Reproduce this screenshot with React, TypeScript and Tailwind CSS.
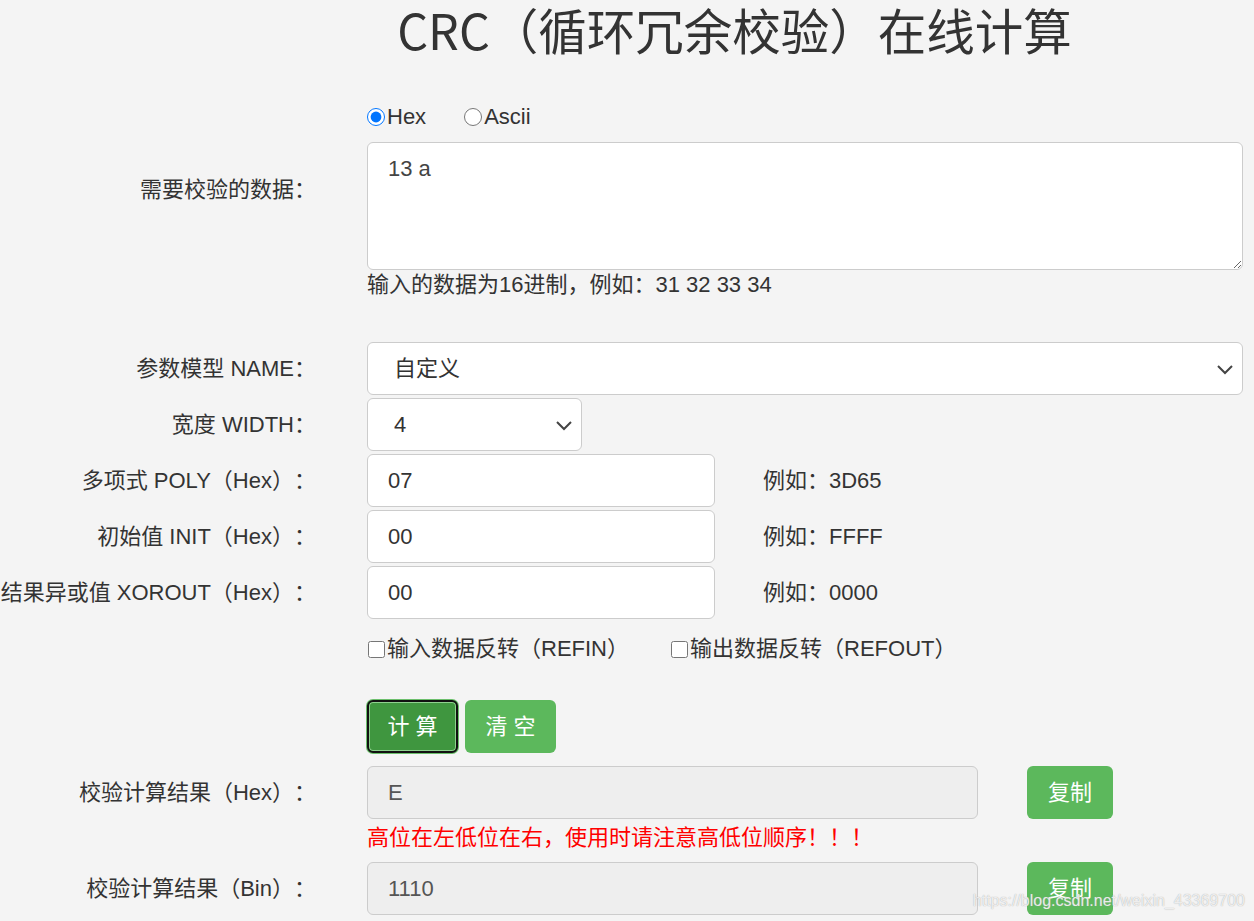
import { useState } from "react";

const Label = ({ children }: { children: React.ReactNode }) => (
  <div className="flex justify-end whitespace-nowrap h-[53px] items-center">{children}</div>
);

const Chevron = () => (
  <svg className="pointer-events-none absolute right-[9px] top-1/2 -translate-y-1/2" width="18" height="12" viewBox="0 0 18 12">
    <path d="M2 3l7 7 7-7" fill="none" stroke="#444" strokeWidth="2" />
  </svg>
);

const App = () => {
  const [mode, setMode] = useState<string>("hex");

  return (
    <div
      className="relative min-h-screen bg-[#f4f4f4] text-[#333] text-[22px] leading-[28px] pr-[11px] overflow-hidden [text-spacing-trim:space-all]"
      style={{ fontFamily: '"Liberation Sans", "Noto Sans CJK SC", sans-serif' }}
    >
      <h1
        className="pl-[226px] text-center text-[48.5px] leading-[58px] text-[#333] whitespace-nowrap"
        style={{ fontFamily: '"Noto Sans CJK SC", sans-serif' }}
      >
        CRC（循环冗余校验）在线计算
      </h1>

      <div className="grid grid-cols-[316px_1fr] gap-x-[51px] mt-[44px]">
        <div />
        <div className="flex items-center gap-[38px] h-[30px]">
          <label className="flex items-center">
            <input
              type="radio"
              checked={mode === "hex"}
              onChange={() => setMode("hex")}
              className="m-0 w-[18px] h-[18px] accent-[#0075ff]"
            />
            <span className="ml-[2px]">Hex</span>
          </label>
          <label className="flex items-center">
            <input
              type="radio"
              checked={mode === "ascii"}
              onChange={() => setMode("ascii")}
              className="m-0 w-[18px] h-[18px]"
            />
            <span className="ml-[2px]">Ascii</span>
          </label>
        </div>

        <div className="flex justify-end whitespace-nowrap pt-[44px]">需要校验的数据：</div>
        <div className="mt-[10px]">
          <textarea
            defaultValue="13 a"
            className="block w-full h-[128px] bg-white border border-[#ccc] rounded-[6px] px-[20px] py-[12px] text-[22px] leading-[28px] text-[#444] resize-y outline-none"
          />
          <div className="leading-[28px] mt-px whitespace-nowrap">输入的数据为16进制，例如：31 32 33 34</div>
        </div>
      </div>

      <div className="grid grid-cols-[316px_1fr] gap-x-[51px] gap-y-[3px] mt-[43px]">
        <Label>参数模型 NAME：</Label>
        <div className="relative">
          <select className="appearance-none w-full h-[53px] bg-white border border-[#ccc] rounded-[6px] pl-[26px] text-[22px] text-[#333] outline-none">
            <option>自定义</option>
          </select>
          <Chevron />
        </div>

        <Label>宽度 WIDTH：</Label>
        <div className="relative w-[215px]">
          <select className="appearance-none w-full h-[53px] bg-white border border-[#ccc] rounded-[6px] pl-[26px] text-[22px] text-[#333] outline-none">
            <option>4</option>
          </select>
          <Chevron />
        </div>

        <Label>多项式 POLY（Hex）：</Label>
        <div className="flex items-center gap-[48px]">
          <input
            defaultValue="07"
            className="w-[348px] h-[53px] bg-white border border-[#ccc] rounded-[6px] px-[20px] text-[22px] text-[#333] outline-none"
          />
          <span className="whitespace-nowrap">例如：3D65</span>
        </div>

        <Label>初始值 INIT（Hex）：</Label>
        <div className="flex items-center gap-[48px]">
          <input
            defaultValue="00"
            className="w-[348px] h-[53px] bg-white border border-[#ccc] rounded-[6px] px-[20px] text-[22px] text-[#333] outline-none"
          />
          <span className="whitespace-nowrap">例如：FFFF</span>
        </div>

        <Label>结果异或值 XOROUT（Hex）：</Label>
        <div className="flex items-center gap-[48px]">
          <input
            defaultValue="00"
            className="w-[348px] h-[53px] bg-white border border-[#ccc] rounded-[6px] px-[20px] text-[22px] text-[#333] outline-none"
          />
          <span className="whitespace-nowrap">例如：0000</span>
        </div>
      </div>

      <div className="grid grid-cols-[316px_1fr] gap-x-[51px] mt-[16px]">
        <div />
        <div className="flex items-center h-[28px] whitespace-nowrap">
          <label className="flex items-center">
            <input type="checkbox" className="m-0 ml-px w-[17px] h-[17px]" />
            <span className="ml-[2px]">输入数据反转（REFIN）</span>
          </label>
          <label className="flex items-center ml-[42px]">
            <input type="checkbox" className="m-0 w-[17px] h-[17px]" />
            <span className="ml-[2px]">输出数据反转（REFOUT）</span>
          </label>
        </div>

        <div />
        <div className="flex gap-[7px] mt-[37px]">
          <button className="w-[91px] h-[53px] rounded-[6px] bg-[#3f963f] text-white text-[22px] border-2 border-[#111] shadow-[0_0_0_1px_#6cbf6c,inset_0_0_0_1px_#8fd18f]">
            计 算
          </button>
          <button className="w-[91px] h-[53px] rounded-[6px] bg-[#5cb85c] text-white text-[22px]">
            清 空
          </button>
        </div>
      </div>

      <div className="grid grid-cols-[316px_1fr] gap-x-[51px] mt-[13px]">
        <Label>校验计算结果（Hex）：</Label>
        <div>
          <div className="flex items-center gap-[49px]">
            <input
              readOnly
              value="E"
              className="w-[611px] h-[53px] bg-[#eee] border border-[#ccc] rounded-[6px] px-[20px] text-[22px] text-[#555] outline-none"
            />
            <button className="w-[86px] h-[53px] rounded-[6px] bg-[#5cb85c] text-white text-[22px]">复制</button>
          </div>
          <div className="text-[#ff0000] mt-[5px] whitespace-nowrap">高位在左低位在右，使用时请注意高低位顺序！！！</div>
        </div>

        <div className="mt-[10px]">
          <Label>校验计算结果（Bin）：</Label>
        </div>
        <div className="flex items-center gap-[49px] mt-[10px]">
          <input
            readOnly
            value="1110"
            className="w-[611px] h-[53px] bg-[#eee] border border-[#ccc] rounded-[6px] px-[20px] text-[22px] text-[#555] outline-none"
          />
          <button className="w-[86px] h-[53px] rounded-[6px] bg-[#5cb85c] text-white text-[22px]">复制</button>
        </div>
      </div>

      <div className="absolute right-[9px] bottom-[6px] text-[16px] leading-[28px] text-white/80 [text-shadow:0_0_1px_#999]">
        https://blog.csdn.net/weixin_43369700
      </div>
    </div>
  );
};
export default App;
